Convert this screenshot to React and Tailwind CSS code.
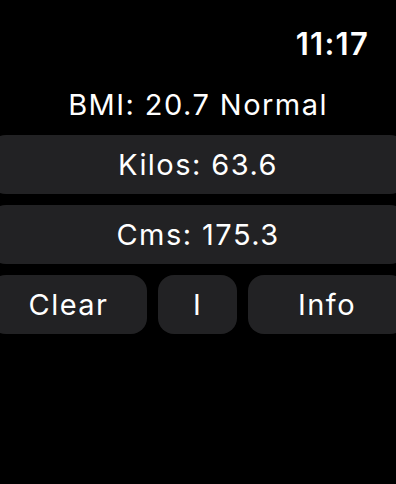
export default function App() {
  return (
    <div
      className="w-[396px] h-[484px] overflow-hidden bg-black text-white"
      style={{ fontFamily: 'Inter, "Noto Sans", sans-serif' }}
    >
      <div className="flex justify-end pt-[28px] pr-[27px]">
        <span className="text-[31px] leading-none font-semibold tracking-[0.04em]">11:17</span>
      </div>

      <p className="mt-[31px] text-center text-[29px] leading-none tracking-[0.05em]">BMI: 20.7 Normal</p>

      <div className="-mx-[10px] mt-[16px] flex flex-col gap-[11px] text-[29px] leading-none tracking-[0.05em]">
        <button className="h-[59px] rounded-[16px] bg-[#222224]">Kilos: 63.6</button>
        <button className="h-[59px] rounded-[16px] bg-[#222224]">Cms: 175.3</button>
        <div className="grid grid-cols-[157px_79px_158px] gap-[11px]">
          <button className="h-[59px] rounded-[16px] bg-[#222224]">Clear</button>
          <button className="h-[59px] rounded-[16px] bg-[#222224]">I</button>
          <button className="h-[59px] rounded-[16px] bg-[#222224]">Info</button>
        </div>
      </div>
    </div>
  );
}
